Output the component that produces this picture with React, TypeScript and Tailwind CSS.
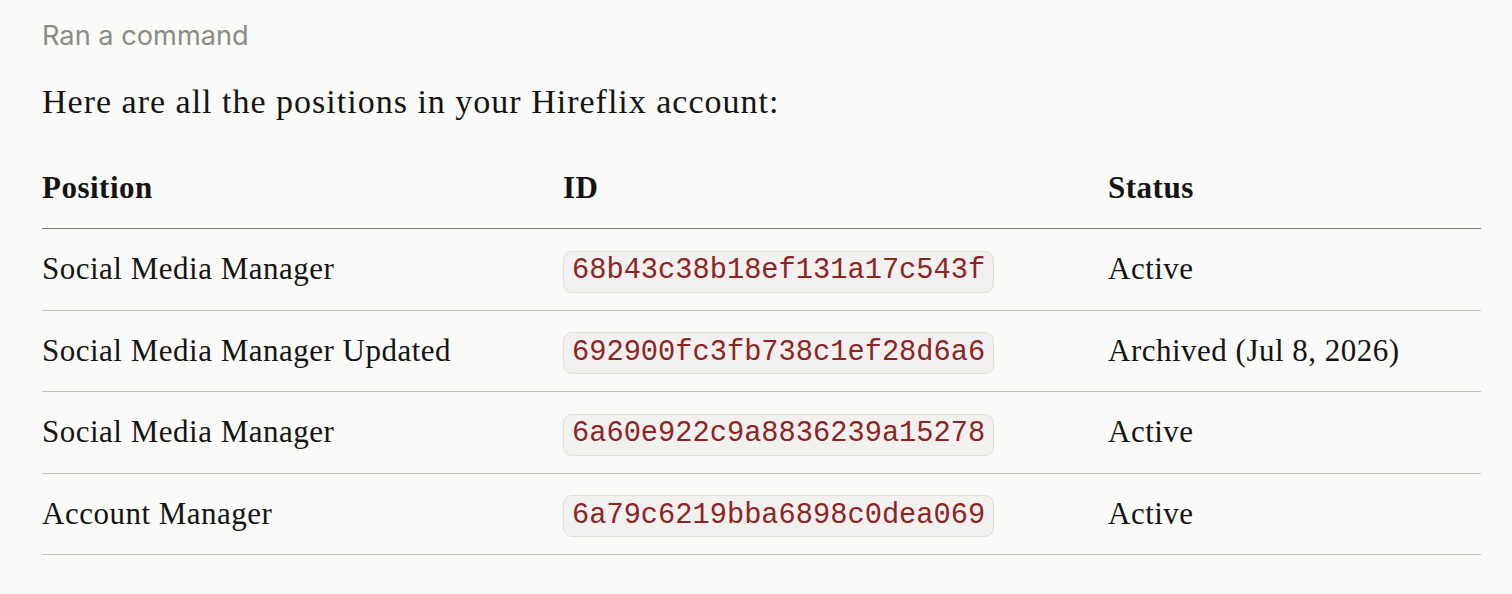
const rows = [
  { name: 'Social Media Manager', id: '68b43c38b18ef131a17c543f', status: 'Active' },
  { name: 'Social Media Manager Updated', id: '692900fc3fb738c1ef28d6a6', status: 'Archived (Jul 8, 2026)' },
  { name: 'Social Media Manager', id: '6a60e922c9a8836239a15278', status: 'Active' },
  { name: 'Account Manager', id: '6a79c6219bba6898c0dea069', status: 'Active' },
];

const App = () => {
  return (
    <div className="min-h-[594px] bg-[#fafaf8] pl-[42px] pr-[31px] pt-[20px] text-[#141413]">
      <div className="font-['Inter',sans-serif] text-[27.2px] leading-[32px] text-[#8c8b86]">Ran a command</div>
      <p className="mt-[30px] font-['Liberation_Serif',serif] text-[34px] leading-[40px] tracking-[1px]">
        Here are all the positions in your Hireflix account:
      </p>
      <table className="mt-[46px] w-full border-collapse font-['Liberation_Serif',serif] text-[31px] tracking-[0.5px]">
        <thead>
          <tr className="border-b border-[#7a7975]">
            <th className="w-[521px] pb-[20px] text-left font-bold leading-[40px]">Position</th>
            <th className="w-[545px] pb-[20px] text-left font-bold leading-[40px]">ID</th>
            <th className="pb-[20px] text-left font-bold leading-[40px]">Status</th>
          </tr>
        </thead>
        <tbody>
          {rows.map((r) => (
            <tr key={r.id} className="h-[81.5px] border-b border-[#c4c3bf]">
              <td className="leading-[40px]">{r.name}</td>
              <td className="align-middle">
                <span className="inline-flex h-[42px] items-center rounded-[9px] border border-[#e1dfdb] bg-[#f2f1ef] px-[8px] align-middle font-['Liberation_Mono',monospace] text-[28.7px] leading-none tracking-normal text-[#8d2424]">
                  {r.id}
                </span>
              </td>
              <td className="leading-[40px]">{r.status}</td>
            </tr>
          ))}
        </tbody>
      </table>
    </div>
  );
};

export default App;
